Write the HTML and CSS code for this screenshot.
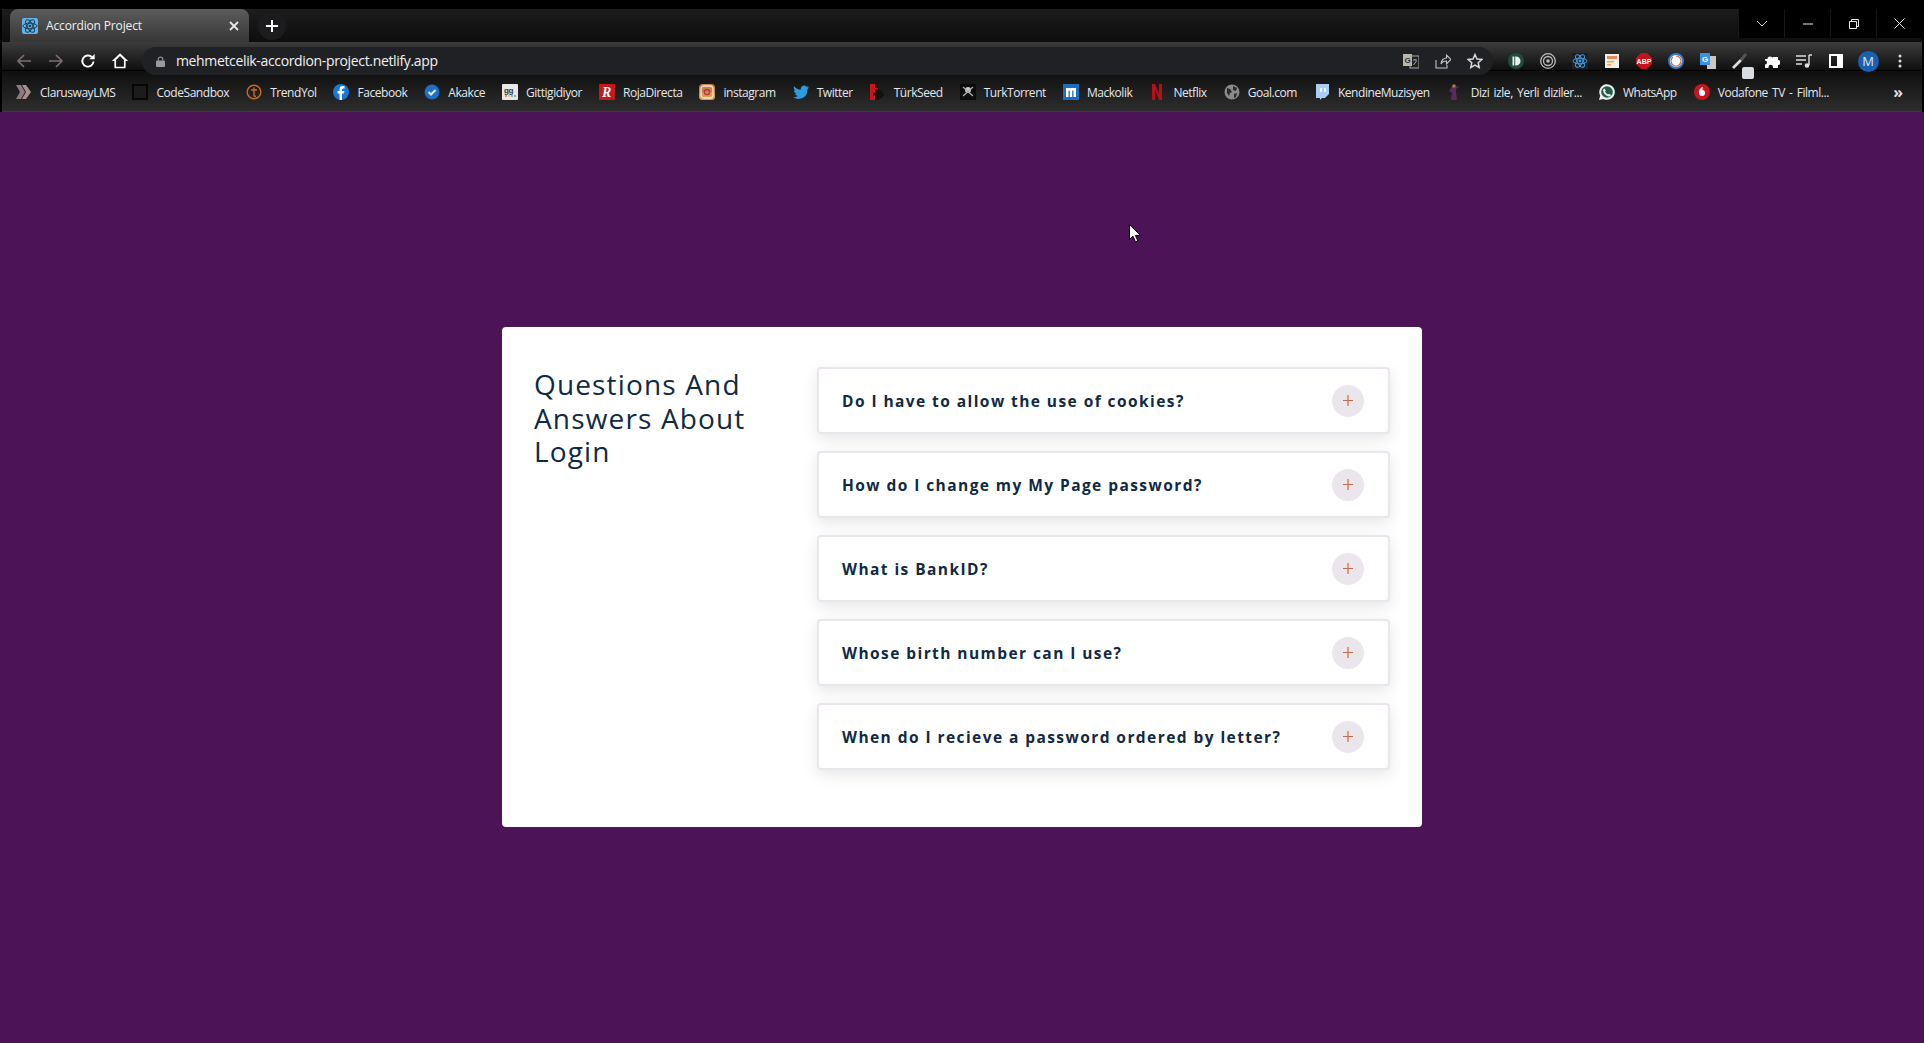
FILE: index.html
```html
<!DOCTYPE html>
<html lang="en">
<head>
    <meta charset="UTF-8">
    <title>Accordion Project</title>
    <link rel="stylesheet" href="styles.css">
</head>
<body>
<header class="browser">
    <div class="tabstrip">
        <div class="tab">
            <svg class="tab-icon" viewBox="0 0 16 16"><rect width="16" height="16" rx="2" fill="#61b3e8"/><g fill="none" stroke="#1d3c5c" stroke-width="1"><ellipse cx="8" cy="8" rx="7" ry="2.8"/><ellipse cx="8" cy="8" rx="7" ry="2.8" transform="rotate(60 8 8)"/><ellipse cx="8" cy="8" rx="7" ry="2.8" transform="rotate(120 8 8)"/></g><circle cx="8" cy="8" r="1.3" fill="#1d3c5c"/></svg>
            <span class="tab-title">Accordion Project</span>
            <svg class="tab-close" viewBox="0 0 10 10"><path d="M1 1l8 8M9 1l-8 8" stroke="#e8e8e8" stroke-width="1.8"/></svg>
        </div>
        <div class="new-tab"><svg viewBox="0 0 12 12" width="12" height="12"><path d="M6 0v12M0 6h12" stroke="#fff" stroke-width="2"/></svg></div>
        <div class="window-controls">
            <div class="win-btn"><svg viewBox="0 0 12 8" width="12" height="8"><path d="M1 1l5 5 5-5" fill="none" stroke="#ccc"/></svg></div>
            <div class="win-btn"><svg viewBox="0 0 10 2" width="10" height="2"><path d="M0 1h10" stroke="#eee" stroke-width="1"/></svg></div>
            <div class="win-btn"><svg viewBox="0 0 10 10" width="10" height="10"><path d="M.5 2.5h7v7h-7zM2.5 2.5v-2h7v7h-2" fill="none" stroke="#eee"/></svg></div>
            <div class="win-btn"><svg viewBox="0 0 11 11" width="11" height="11"><path d="M.5.5l10 10M10.500.5l-10 10" stroke="#eee"/></svg></div>
        </div>
    </div>

    <div class="toolbar">
        <div class="nav-btn"><svg viewBox="0 0 16 16" width="16" height="16"><path d="M15 8H2M8 2L2 8l6 6" fill="none" stroke="#7d6e6e" stroke-width="1.7"/></svg></div>
        <div class="nav-btn"><svg viewBox="0 0 16 16" width="16" height="16"><path d="M1 8h13M8 2l6 6-6 6" fill="none" stroke="#7d6e6e" stroke-width="1.7"/></svg></div>
        <div class="nav-btn"><svg viewBox="0 0 16 16" width="16" height="16"><path d="M13.500 8.500A5.600 5.600 0 1 1 11.800 4" fill="none" stroke="#fff" stroke-width="1.900"/><path d="M9.300 6.300h5.400V1z" fill="#fff"/></svg></div>
        <div class="nav-btn"><svg viewBox="0 0 16 16" width="18" height="18"><path d="M8 1L.8 8h2.200v6.500h10V8h2.200zM4.500 13V7.200L8 3.600l3.500 3.600V13z" fill="#fff" fill-rule="evenodd"/></svg></div>

        <div class="omnibox">
            <svg class="lock" viewBox="0 0 10 12" width="9" height="11"><path d="M2.500 5V3.500a2.500 2.500 0 0 1 5 0V5" fill="none" stroke="#9a9a9a" stroke-width="1.200"/><rect y="5" width="10" height="7" rx="1" fill="#9a9a9a"/></svg>
            <span class="url">mehmetcelik-accordion-project.netlify.app</span>
            <div class="omni-actions">
                <svg viewBox="0 0 16 16" width="16" height="16"><rect x="0" y="1" width="9" height="12" fill="#b9b9aa"/><rect x="7" y="3" width="9" height="12" fill="none" stroke="#aaa"/><text x="1.500" y="10" class="mini-text" fill="#333">G</text><path d="M10 7h4M12 6v1M10.500 12l3-4" stroke="#aaa" fill="none"/></svg>
                <svg viewBox="0 0 16 16" width="16" height="16"><path d="M1 7v8h11v-3M6 11c0-4 3-6 5.500-6V2L16 6.500 11.500 11V8C9 8 7 9 6 11z" fill="none" stroke="#c4c4c4" stroke-width="1.100"/></svg>
                <svg viewBox="0 0 16 16" width="16" height="16"><path d="M8 1.500l2 4.500 4.800.5-3.600 3.200 1 4.800L8 12.100l-4.200 2.400 1-4.800L1.200 6.500 6 6z" fill="none" stroke="#d8d8d8" stroke-width="1.500"/></svg>
            </div>
        </div>

        <div class="ext-list">
            <div class="ext"><svg viewBox="0 0 16 16" width="16" height="16"><circle cx="8" cy="8" r="8" fill="#1e4d3f"/><path d="M4.500 3.500H8a4.500 4.500 0 0 1 0 9H7.200v-9H6.300v9H4.500z" fill="#eee"/></svg></div>
            <div class="ext"><svg viewBox="0 0 16 16" width="16" height="16"><g fill="none" stroke="#bbb"><circle cx="8" cy="8" r="7.300" stroke-width="1.300"/><circle cx="8" cy="8" r="4.500" stroke-width="1.300"/></g><circle cx="8" cy="8" r="1.800" fill="#bbb"/></svg></div>
            <div class="ext"><svg viewBox="0 0 16 16" width="16" height="16"><rect width="16" height="16" fill="#1b2026"/><g fill="none" stroke="#4b9be0"><ellipse cx="8" cy="8" rx="7" ry="2.800"/><ellipse cx="8" cy="8" rx="7" ry="2.800" transform="rotate(60 8 8)"/><ellipse cx="8" cy="8" rx="7" ry="2.800" transform="rotate(120 8 8)"/></g><circle cx="8" cy="8" r="1.400" fill="#4b9be0"/></svg></div>
            <div class="ext"><svg viewBox="0 0 16 16" width="16" height="16"><rect x="1" y="1" width="14" height="14" fill="#f3efe6"/><rect x="3" y="3" width="10" height="3" fill="#ea8a5c"/><rect x="3" y="8" width="7" height="1.500" fill="#eda35c"/><rect x="3" y="11" width="4" height="1.500" fill="#eda35c"/></svg></div>
            <div class="ext"><svg viewBox="0 0 16 16" width="16" height="16"><path d="M5 0h6l5 5v6l-5 5H5l-5-5V5z" fill="#c5121d"/><text x="8" y="10.500" class="abp-text" fill="#fff">ABP</text></svg></div>
            <div class="ext"><svg viewBox="0 0 16 16" width="16" height="16"><circle cx="8" cy="8" r="7" fill="#fff" stroke="#2f7fd0" stroke-width="2"/><path d="M8 3a5 5 0 1 1-3 1" fill="none" stroke="#e2673f" stroke-width="1.200"/></svg></div>
            <div class="ext"><svg viewBox="0 0 16 16" width="16" height="16"><rect x="7" y="3" width="9" height="13" fill="#c8c8c0"/><rect y="0" width="10" height="12" fill="#3d8fe0"/><text x="2" y="9" class="mini-text" fill="#fff">G</text></svg></div>
            <div class="ext ext-picker">
                <svg viewBox="0 0 16 16" width="16" height="16"><path d="M1 15l8-8" stroke="#ddd" stroke-width="2.600"/><path d="M9 7l5-6" stroke="#555" stroke-width="3"/></svg>
                <span class="ext-badge"></span>
            </div>
            <div class="ext"><svg viewBox="0 0 16 16" width="16" height="16"><path d="M1 6h2.500a2.500 2.500 0 1 1 5 0V4H14v3a2.500 2.500 0 1 1 0 5v3H9v-1a2.200 2.200 0 1 0-4.500 0v1H1v-3.500a2 2 0 1 0 0-4z" fill="#fff"/></svg></div>
            <div class="ext"><svg viewBox="0 0 16 16" width="16" height="16"><path d="M0 3h10M0 7h10M0 11h6" stroke="#ddd" stroke-width="1.400"/><path d="M13 2h3M13 2v10" stroke="#ddd" stroke-width="1.400" fill="none"/><circle cx="11" cy="12.500" r="2.300" fill="#ddd"/></svg></div>
            <div class="ext"><svg viewBox="0 0 14 14" width="14" height="14"><path d="M0 0h14v14H0zM2 2v10h6V2z" fill="#fff" fill-rule="evenodd"/></svg></div>
            <div class="ext"><div class="avatar">M</div></div>
            <div class="ext"><svg viewBox="0 0 4 14" width="4" height="14"><circle cx="2" cy="2" r="1.500" fill="#ddd"/><circle cx="2" cy="7" r="1.500" fill="#ddd"/><circle cx="2" cy="12" r="1.500" fill="#ddd"/></svg></div>
        </div>
    </div>

    <nav class="bookmarks">
        <a class="bookmark"><svg viewBox="0 0 16 16"><path d="M0 1h5l4 7-4 7H0l4-7z" fill="#8c7a80"/><path d="M6 1h4l5 7-5 7H6l4-7z" fill="#a98f8a"/></svg>ClaruswayLMS</a>
        <a class="bookmark"><svg viewBox="0 0 16 16"><rect x="1" y="1" width="14" height="14" fill="#1c1c1c" stroke="#000" stroke-width="1.500"/></svg>CodeSandbox</a>
        <a class="bookmark"><svg viewBox="0 0 16 16"><circle cx="8" cy="8" r="6.800" fill="none" stroke="#c9682c" stroke-width="1.500"/><path d="M5 6h6M8 3.500v7.500q0 1.500 2 1.500" fill="none" stroke="#c9682c" stroke-width="1.500"/></svg>TrendYol</a>
        <a class="bookmark"><svg viewBox="0 0 16 16"><circle cx="8" cy="8" r="8" fill="#1a77d2"/><path d="M9 16V9.500h2l.4-2.500H9V5.700q0-1.200 1.200-1.200h1.300V2.300Q10.500 2.100 9.600 2.100 6.600 2.100 6.600 5.300V7H4.500v2.500h2.100V16z" fill="#fff"/></svg>Facebook</a>
        <a class="bookmark"><svg viewBox="0 0 16 16"><circle cx="8" cy="8" r="7.500" fill="#1f6fc4"/><path d="M4.500 8l2.500 2.500 4.500-4.500" fill="none" stroke="#dfe9f5" stroke-width="2"/></svg>Akakce</a>
        <a class="bookmark"><svg viewBox="0 0 16 16"><rect width="16" height="16" rx="1" fill="#e8e8e8"/><text x="2" y="8.500" class="mini-text" fill="#333">gg</text><path d="M3 12h2" stroke="#d33"/><path d="M6 12h2" stroke="#e8a33c"/><path d="M9 12h2" stroke="#3a8f3c"/><path d="M12 12h2" stroke="#36c"/></svg>Gittigidiyor</a>
        <a class="bookmark"><svg viewBox="0 0 16 16"><rect width="16" height="16" rx="1" fill="#c8161d"/><text x="3" y="13" class="roja-text" fill="#fff">R</text></svg>RojaDirecta</a>
        <a class="bookmark"><svg viewBox="0 0 16 16"><rect width="16" height="16" rx="4" fill="#c8824a"/><rect y="8" width="16" height="8" rx="4" fill="#d6a04f"/><rect x="2" y="2" width="12" height="12" rx="3" fill="none" stroke="#f3e6dc" stroke-width="1.300"/><circle cx="8" cy="8" r="2.600" fill="none" stroke="#c9323f" stroke-width="1.500"/></svg>instagram</a>
        <a class="bookmark"><svg viewBox="0 0 16 16"><path d="M16 3.200q-.9.400-1.900.5 1-.6 1.400-1.800-1 .6-2.100.8A3.300 3.300 0 0 0 7.800 5.700Q3.800 5.500 1.100 2.200 0 4.600 2.200 6.600q-.8 0-1.500-.4 0 2.500 2.600 3.300-.7.200-1.500.1.700 2.100 3.100 2.300Q2.900 13.600 0 13.300q7 3.800 12.500-1.400 2-2.300 1.900-6.600.9-.7 1.600-2.100z" fill="#2c9be0"/></svg>Twitter</a>
        <a class="bookmark"><svg viewBox="0 0 16 16"><path d="M0 0h5v4h3v5H5v7H0z" fill="#c8161d"/><path d="M5 5q7 0 9 6-2 5-9 5z" fill="#111"/><path d="M3 8l3 2-3 2z" fill="#111"/></svg>TürkSeed</a>
        <a class="bookmark"><svg viewBox="0 0 16 16"><rect width="16" height="16" fill="#0c0c0c"/><circle cx="8" cy="6" r="3" fill="#c8c8c8"/><path d="M3 3l10 9M13 3L3 12" stroke="#aaa" stroke-width="1.300"/></svg>TurkTorrent</a>
        <a class="bookmark"><svg viewBox="0 0 16 16"><rect width="16" height="16" fill="#1b6fbe"/><path d="M3 13V4h10v9h-2.500V6.500H9.200V13H6.800V6.500H5.500V13z" fill="#fff"/></svg>Mackolik</a>
        <a class="bookmark"><svg viewBox="0 0 12 16"><path d="M1 0h3l4 10V0h3v16H8L4 6v10H1z" fill="#b5101a"/></svg>Netflix</a>
        <a class="bookmark"><svg viewBox="0 0 16 16"><circle cx="8" cy="8" r="7.500" fill="#8a8a8a"/><path d="M3 4l3 1 2 3-2 1-1 3-2-3zM9 2l4 2-1 3-3-1zM10 10l3-1-1 4-2 1z" fill="#2a2a2a"/></svg>Goal.com</a>
        <a class="bookmark"><svg viewBox="0 0 16 16"><path d="M2 0h13v10l-4 4H8l-2 2v-2H2z" fill="#a9cdf5"/><path d="M7 4v4M11 4v4" stroke="#fff" stroke-width="1.500"/></svg>KendineMuzisyen</a>
        <a class="bookmark"><svg viewBox="0 0 12 16"><path d="M3 2l3 1 5-1-4 3v3l1 8H2l1-7-3-2z" fill="#5a2a5c"/><circle cx="5" cy="2" r="1.800" fill="#b7744a"/></svg>Dizi izle, Yerli diziler...</a>
        <a class="bookmark"><svg viewBox="0 0 16 16"><path d="M0 16l1.200-4.200A7.800 7.800 0 1 1 4.300 14.900z" fill="#eee"/><circle cx="8" cy="8" r="5.800" fill="#1f5f4a"/><path d="M5.500 4.500l1.300 2-.8 1q1 2 3 3l1-.8 2 1.300q-.5 1.500-2 1.500-5 -.8-6-6 0-1.500 1.500-2z" fill="#eee"/></svg>WhatsApp</a>
        <a class="bookmark"><svg viewBox="0 0 16 16"><circle cx="8" cy="8" r="8" fill="#c8161d"/><path d="M9 3q-4 1-4 5.500Q5 12 8 12t3-3-2.500-3q0-1.500.5-3z" fill="#fff"/></svg>Vodafone TV - Filml...</a>
        <span class="more-bookmarks">»</span>
    </nav>
</header>

<main class="page">
    <section class="card">
        <h1 class="card-title">Questions And Answers About Login</h1>
        <div class="questions">
            <article class="question"><h2>Do I have to allow the use of cookies?</h2><button class="toggle"><svg viewBox="0 0 10 11" width="10" height="11"><path d="M5 0v11" stroke="#e8967a" stroke-width="2"/><path d="M0 5.500h10" stroke="#bb6f58" stroke-width="1"/></svg></button></article>
            <article class="question"><h2>How do I change my My Page password?</h2><button class="toggle"><svg viewBox="0 0 10 11" width="10" height="11"><path d="M5 0v11" stroke="#e8967a" stroke-width="2"/><path d="M0 5.500h10" stroke="#bb6f58" stroke-width="1"/></svg></button></article>
            <article class="question"><h2>What is BankID?</h2><button class="toggle"><svg viewBox="0 0 10 11" width="10" height="11"><path d="M5 0v11" stroke="#e8967a" stroke-width="2"/><path d="M0 5.500h10" stroke="#bb6f58" stroke-width="1"/></svg></button></article>
            <article class="question"><h2>Whose birth number can I use?</h2><button class="toggle"><svg viewBox="0 0 10 11" width="10" height="11"><path d="M5 0v11" stroke="#e8967a" stroke-width="2"/><path d="M0 5.500h10" stroke="#bb6f58" stroke-width="1"/></svg></button></article>
            <article class="question"><h2>When do I recieve a password ordered by letter?</h2><button class="toggle"><svg viewBox="0 0 10 11" width="10" height="11"><path d="M5 0v11" stroke="#e8967a" stroke-width="2"/><path d="M0 5.500h10" stroke="#bb6f58" stroke-width="1"/></svg></button></article>
        </div>
    </section>
    <svg class="cursor" viewBox="0 0 12 19" width="12" height="19"><path d="M.5.500v15l3.500-3.300 2.500 5.800 2.400-1-2.500-5.600h5z" fill="#fff" stroke="#000"/></svg>
</main>
</body>
</html>
```

FILE: styles.css
```css
:root {
  --color-purple: #4c1457;
  --color-navy: #102a43;
  --color-line: #ebe6ee;
}

* {
  box-sizing: border-box;
}

html,
body {
  height: 100%;
}

body {
  margin: 0;
  display: flex;
  flex-direction: column;
  overflow: hidden;
  font-family: "Open Sans", "Noto Sans", sans-serif;
  background: var(--color-purple);
}

/* Browser frame */
.browser {
  flex: none;
  background: #000;
  padding: 9px 2px 0;
  color: #eee;
}

.tabstrip {
  display: flex;
  height: 33px;
  padding-left: 8px;
  background: linear-gradient(#1c1c1c, #0d0d0d);
}

.tab {
  display: flex;
  align-items: center;
  width: 239px;
  padding: 0 10px 0 12px;
  border-radius: 8px 8px 0 0;
  background: linear-gradient(#5c5c5c, #363636);
}

.tab-icon {
  width: 16px;
  height: 16px;
  margin-right: 8px;
}

.tab-title {
  flex: 1;
  font-size: 12px;
  letter-spacing: -0.15px;
  color: #f0f0f0;
}

.tab-close {
  width: 10px;
  height: 10px;
}

.new-tab {
  display: flex;
  align-items: center;
  justify-content: center;
  width: 28px;
  height: 28px;
  margin: 3px 0 0 9px;
  border-radius: 50%;
  background: #1c1c1e;
}

.window-controls {
  display: flex;
  margin-left: auto;
  height: 29px;
  background: #000;
}

.win-btn {
  display: flex;
  align-items: center;
  justify-content: center;
  width: 46px;
  border-left: 1px solid #161616;
}

.toolbar {
  position: relative;
  z-index: 1;
  display: flex;
  height: 29px;
  padding: 5px 0 0 6px;
  background: linear-gradient(#3c3c3c, #0f0f0f);
  border-bottom: 1px solid #000;
}

.nav-btn {
  display: flex;
  align-items: center;
  justify-content: center;
  width: 32px;
  height: 28px;
}

.omnibox {
  display: flex;
  align-items: center;
  width: 1351px;
  height: 28px;
  margin-left: 6px;
  padding: 0 10px 0 14px;
  border-radius: 14px;
  background: #202124;
}

.lock {
  margin-right: 11px;
}

.url {
  flex: 1;
  padding-bottom: 1px;
  font-size: 14px;
  letter-spacing: -0.35px;
  color: #f2f2f2;
}

.omni-actions {
  display: flex;
  gap: 16px;
}

.ext-list {
  display: flex;
  margin-left: 7px;
}

.ext {
  position: relative;
  display: flex;
  align-items: center;
  justify-content: center;
  width: 32px;
  height: 28px;
}

.ext-badge {
  position: absolute;
  right: 2px;
  bottom: -4px;
  width: 12px;
  height: 12px;
  border-radius: 2px;
  background: #dadce3;
}

.avatar {
  width: 21px;
  height: 21px;
  border-radius: 50%;
  background: #1a5fb0;
  color: #dfe9f8;
  font-size: 13px;
  line-height: 21px;
  text-align: center;
}

.mini-text {
  font-family: "Liberation Sans", sans-serif;
  font-size: 8px;
  font-weight: bold;
}

.abp-text {
  font-family: "Liberation Sans", sans-serif;
  font-size: 7px;
  font-weight: bold;
  text-anchor: middle;
}

.roja-text {
  font-family: "Liberation Serif", serif;
  font-size: 14px;
  font-weight: bold;
  font-style: italic;
}

.bookmarks {
  display: flex;
  align-items: center;
  gap: 17px;
  height: 41px;
  padding: 2px 0 0 14px;
  background: linear-gradient(#0f0f0f, #2d2d2d);
  border-bottom: 1px solid #3b3b3b;
}

.bookmark {
  display: flex;
  align-items: center;
  gap: 8px;
  font-size: 12px;
  letter-spacing: -0.45px;
  word-spacing: 1.5px;
  color: #e4e8ee;
  white-space: nowrap;
}

.bookmark svg {
  width: 16px;
  height: 16px;
  flex: none;
}

.more-bookmarks {
  margin-left: auto;
  margin-right: 19px;
  font-size: 16px;
  font-weight: bold;
  color: #ddd;
}

/* Page */
.page {
  flex: 1;
  display: flex;
  align-items: center;
  justify-content: center;
  position: relative;
  padding-bottom: 1px;
}

.card {
  display: grid;
  grid-template-columns: 283px 573px;
  align-content: start;
  width: 920px;
  height: 500px;
  padding: 40px 32px 0;
  border-radius: 4px;
  background: #fff;
}

.card-title {
  margin: 1px 0 0;
  max-width: 240px;
  font-size: 28px;
  font-weight: 500;
  line-height: 33.6px;
  letter-spacing: 1.15px;
  color: var(--color-navy);
}

.questions {
  display: flex;
  flex-direction: column;
  gap: 17px;
}

.question {
  display: flex;
  align-items: center;
  justify-content: space-between;
  height: 67px;
  padding: 0 24px 0 23px;
  border: 2px solid var(--color-line);
  border-radius: 4px;
  background: #fff;
  box-shadow: 0 5px 15px rgba(0, 0, 0, 0.1);
}

.question h2 {
  margin: 0;
  font-size: 15.5px;
  font-weight: 700;
  letter-spacing: 1.43px;
  color: var(--color-navy);
}

.toggle {
  display: flex;
  align-items: center;
  justify-content: center;
  width: 32px;
  height: 32px;
  padding: 0;
  border: 0;
  border-radius: 50%;
  background: #eae6eb;
}

.cursor {
  position: absolute;
  left: 1129px;
  top: 112px;
}
```
